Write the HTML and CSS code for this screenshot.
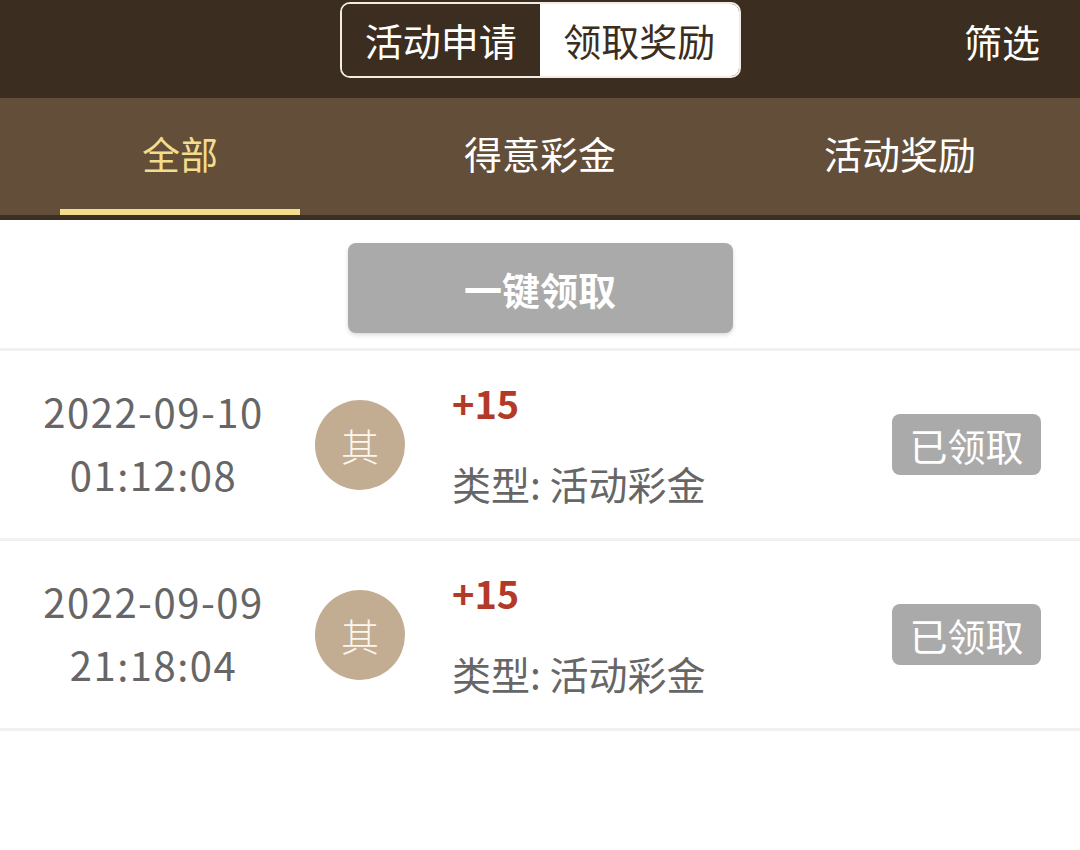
FILE: index.html
```html
<!DOCTYPE html>
<html lang="zh">
<head>
<meta charset="utf-8">
<link rel="stylesheet" href="styles.css">
</head>
<body>
<div class="app">
  <header class="topbar">
    <div class="seg">
      <div class="seg-item seg-dark">活动申请</div>
      <div class="seg-item seg-light">领取奖励</div>
    </div>
    <div class="filter">筛选</div>
  </header>
  <nav class="tabs">
    <div class="tab active"><span>全部</span></div>
    <div class="tab"><span>得意彩金</span></div>
    <div class="tab"><span>活动奖励</span></div>
  </nav>
  <div class="tabs-edge"></div>
  <div class="claim-wrap">
    <button class="claim-btn">一键领取</button>
  </div>
  <ul class="list">
    <li class="row">
      <div class="when"><div>2022-09-10</div><div>01:12:08</div></div>
      <div class="avatar">其</div>
      <div class="info"><div class="amount">+15</div><div class="type">类型: 活动彩金</div></div>
      <div class="status">已领取</div>
    </li>
    <li class="row">
      <div class="when"><div>2022-09-09</div><div>21:18:04</div></div>
      <div class="avatar">其</div>
      <div class="info"><div class="amount">+15</div><div class="type">类型: 活动彩金</div></div>
      <div class="status">已领取</div>
    </li>
  </ul>
</div>
</body>
</html>
```
FILE: styles.css
```css
* { box-sizing: border-box; margin: 0; padding: 0; }
html, body { background: #ffffff; }
body {
  font-family: "Noto Sans CJK SC", "Noto Sans", sans-serif;
  width: 1080px;
  height: 850px;
  overflow: hidden;
}
.topbar {
  height: 98px;
  background: #3b2e20;
  display: flex;
  justify-content: center;
  align-items: flex-start;
  padding-top: 2px;
  position: relative;
}
.seg {
  display: flex;
  width: 401px;
  height: 76px;
  border: 2px solid #f3ece2;
  border-radius: 10px;
  overflow: hidden;
}
.seg-item {
  flex: 1;
  display: flex;
  align-items: center;
  justify-content: center;
  font-size: 38px;
  line-height: 1;
}
.seg-dark { color: #ffffff; background: #3b2e20; }
.seg-light { color: #3b2e20; background: #ffffff; }
.filter {
  position: absolute;
  right: 40px;
  top: 19px;
  font-size: 38px;
  line-height: 44px;
  color: #ffffff;
}
.tabs {
  height: 117px;
  background: #634e39;
  display: flex;
}
.tab {
  flex: 1;
  display: flex;
  justify-content: center;
  align-items: center;
  color: #ffffff;
  font-size: 38px;
  position: relative;
  padding-bottom: 8px;
}
.tab.active { color: #f3dc8c; }
.tab.active::after {
  content: "";
  position: absolute;
  left: 60px;
  right: 60px;
  bottom: 0;
  height: 6px;
  background: #f3dc8c;
}
.tabs-edge { height: 5px; background: #3b2e22; }
.claim-wrap {
  display: flex;
  justify-content: center;
  padding-top: 23px;
  padding-bottom: 15px;
  border-bottom: 3px solid #f1f1f1;
}
.claim-btn {
  width: 385px;
  height: 90px;
  border: none;
  border-radius: 8px;
  background: #aaaaaa;
  color: #ffffff;
  font-family: inherit;
  font-size: 38px;
  font-weight: 700;
  box-shadow: 0 2px 4px rgba(0,0,0,0.15);
}
.list { list-style: none; }
.row {
  height: 190px;
  display: flex;
  align-items: center;
  border-bottom: 3px solid #f1f1f1;
}
.when {
  width: 315px;
  text-align: center;
  color: #666666;
  font-size: 40px;
  letter-spacing: 1.5px;
  line-height: 63px;
  margin-top: -4px;
  padding-right: 8px;
}
.avatar {
  width: 90px;
  height: 90px;
  border-radius: 50%;
  background: #c3ad92;
  color: #fbf6ee;
  font-size: 38px;
  font-weight: 300;
  display: flex;
  align-items: center;
  justify-content: center;
}
.info {
  margin-left: 47px;
  flex: 1;
  display: flex;
  flex-direction: column;
  gap: 38px;
  margin-top: -2px;
}
.amount {
  color: #b33a28;
  font-size: 38px;
  font-weight: 700;
  line-height: 40px;
}
.type {
  color: #666666;
  font-size: 39px;
  line-height: 44px;
}
.status {
  width: 149px;
  height: 61px;
  margin-right: 39px;
  border-radius: 8px;
  background: #aaaaaa;
  color: #ffffff;
  font-size: 38px;
  display: flex;
  align-items: center;
  justify-content: center;
}
```
